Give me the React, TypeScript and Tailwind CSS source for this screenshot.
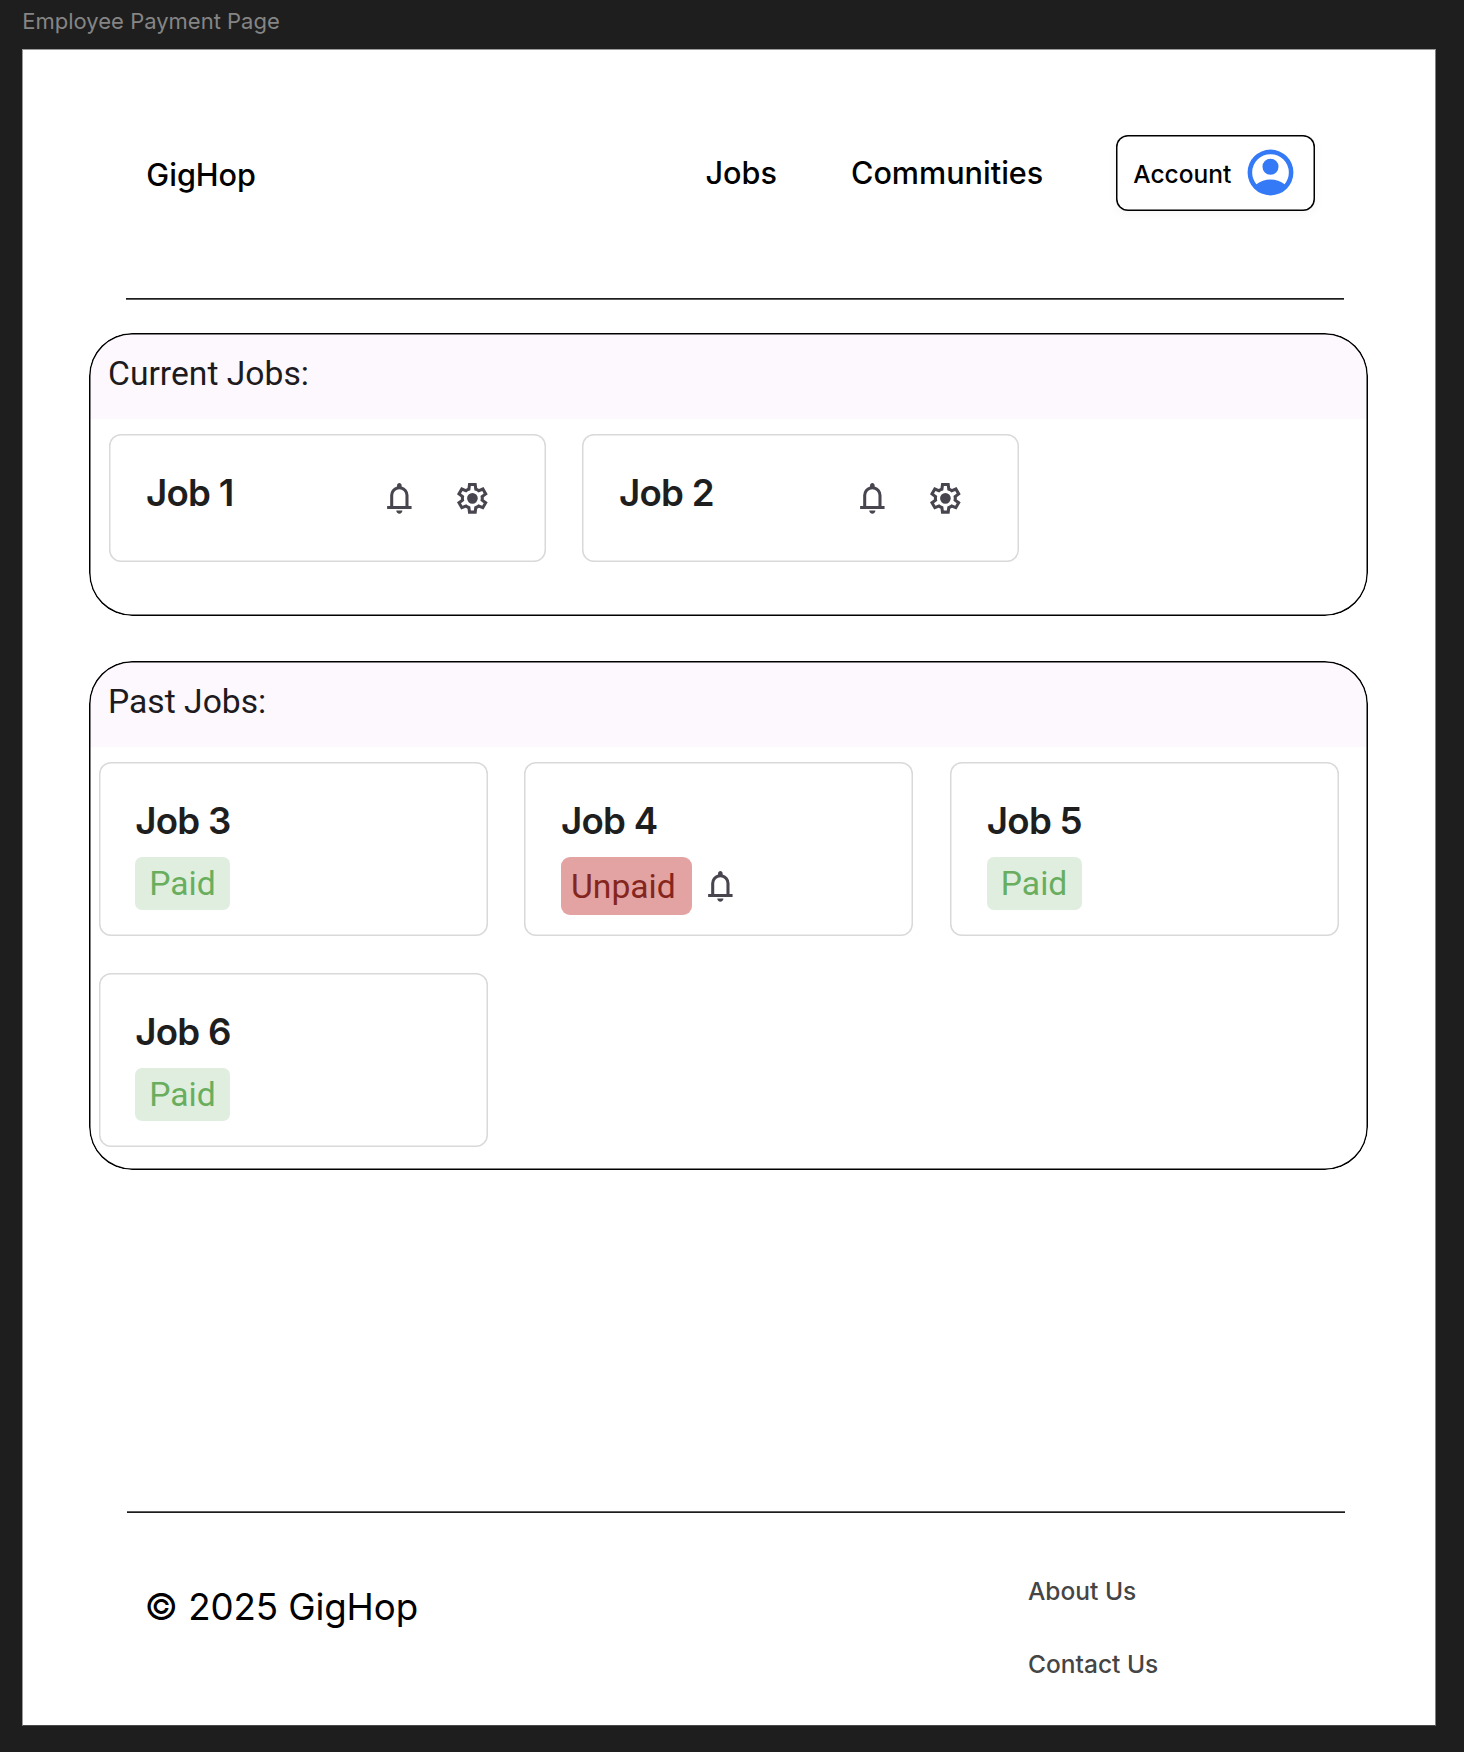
import React from "react";

function BellIcon({ className = "" }: { className?: string }) {
  return (
    <svg viewBox="0 0 24 24" fill="#49454f" className={`size-[36.7px] shrink-0 ${className}`}>
      <path d="M4 19v-2h2v-7q0-2.075 1.25-3.687T10.5 4.2v-.7q0-.625.438-1.062T12 2t1.063.438T13.5 3.5v.7q2 .5 3.25 2.113T18 10v7h2v2zm8 3q-.825 0-1.412-.587T10 20h4q0 .825-.587 1.413T12 22m-4-5h8v-7q0-1.65-1.175-2.825T12 6T9.175 7.175T8 10z" />
    </svg>
  );
}

function GearIcon({ className = "" }: { className?: string }) {
  return (
    <svg viewBox="0 0 24 24" fill="#49454f" className={`size-[36.7px] shrink-0 ${className}`}>
      <path d="m9.25 22l-.4-3.2q-.325-.125-.612-.3t-.563-.375L4.7 19.375l-2.75-4.75l2.575-1.95Q4.5 12.5 4.5 12.337v-.675q0-.162.025-.337L1.95 9.375l2.75-4.75l2.975 1.25q.275-.2.575-.375t.6-.3l.4-3.2h5.5l.4 3.2q.325.125.613.3t.562.375l2.975-1.25l2.75 4.75l-2.575 1.95q.025.175.025.338v.674q0 .163-.05.338l2.575 1.95l-2.75 4.75l-2.95-1.25q-.275.2-.575.375t-.6.3l-.4 3.2zm1.75-2h1.975l.35-2.65q.775-.2 1.438-.587t1.212-.938l2.475 1.025l.975-1.7l-2.15-1.625q.125-.35.175-.737T17.5 12t-.05-.787t-.175-.738l2.15-1.625l-.975-1.7l-2.475 1.05q-.55-.575-1.212-.962t-1.438-.588L13 4h-1.975l-.35 2.65q-.775.2-1.437.588t-1.213.937L5.55 7.15l-.975 1.7l2.15 1.6q-.125.375-.175.75t-.05.8q0 .4.05.775t.175.75l-2.15 1.625l.975 1.7l2.475-1.05q.55.575 1.213.963t1.437.587zm1.05-4.5q1.45 0 2.475-1.025T15.55 12t-1.025-2.475T12.05 8.5q-1.475 0-2.487 1.025T8.55 12t1.013 2.475T12.05 15.5" />
    </svg>
  );
}

function AccountIcon({ className = "" }: { className?: string }) {
  return (
    <svg viewBox="0 0 24 24" fill="#347af6" className={`size-[55px] shrink-0 ${className}`}>
      <path d="M5.85 17.1q1.275-.975 2.85-1.537T12 15t3.3.563t2.85 1.537q.875-1.025 1.363-2.325T20 12q0-3.325-2.337-5.663T12 4T6.337 6.338T4 12q0 1.475.488 2.775T5.85 17.1M12 13q-1.475 0-2.488-1.012T8.5 9.5t1.013-2.488T12 6t2.488 1.013T15.5 9.5t-1.012 2.488T12 13m0 9q-2.075 0-3.9-.788t-3.175-2.137T2.788 15.9T2 12t.788-3.9t2.137-3.175T8.1 2.788T12 2t3.9.788t3.175 2.137T21.213 8.1T22 12t-.788 3.9t-2.137 3.175t-3.175 2.138T12 22" />
    </svg>
  );
}

const cardClass =
  "rounded-[12px] shadow-[inset_0_0_0_1.5px_#d9d9d9] bg-white shrink-0";
const jobTitleClass =
  "text-[36.7px] leading-[44px] font-semibold tracking-[-0.02em] text-[#1e1e1e] whitespace-nowrap";

function CurrentJobCard({ title }: { title: string }) {
  return (
    <div className={`${cardClass} flex h-[128px] w-[436.5px] items-start pl-[36.6px]`}>
      <h3 className={`${jobTitleClass} mt-[37px] w-[235px]`}>{title}</h3>
      <BellIcon className="mt-[45.5px]" />
      <GearIcon className="mt-[45.5px] ml-[36.7px]" />
    </div>
  );
}

function PastJobCard({ title, paid }: { title: string; paid: boolean }) {
  return (
    <div className={`${cardClass} h-[174px] w-[389px] pt-[37px] pl-[36.5px]`}>
      <h3 className={jobTitleClass}>{title}</h3>
      {paid ? (
        <div className="mt-[14px] h-[53px] w-[95px] rounded-[7px] bg-[#e0eee0] pl-[14px] font-[Roboto] text-[33.66px] leading-[53px] text-[#69ae5e]">
          Paid
        </div>
      ) : (
        <div className="mt-[13.5px] flex">
          <div className="h-[58px] w-[131.5px] rounded-[9px] bg-[#e3a3a3] pl-[10px] font-[Roboto] text-[33.66px] leading-[59px] text-[#85261e]">
            Unpaid
          </div>
          <BellIcon className="mt-[11px] ml-[9.3px]" />
        </div>
      )}
    </div>
  );
}

function PanelTitle({ children }: { children: React.ReactNode }) {
  return (
    <h2 className="h-[86px] bg-[#fdf8fe] pt-[20px] pl-[19px] font-[Roboto] text-[33.66px] leading-[42px] text-[#1d1b20]">
      {children}
    </h2>
  );
}

const panelClass =
  "relative ml-[66px] w-[1279px] overflow-hidden rounded-[43px] after:pointer-events-none after:absolute after:inset-0 after:rounded-[43px] after:shadow-[inset_0_0_0_1.5px_#000]";

export default function App() {
  return (
    <div className="h-[1752px] w-[1464px] overflow-hidden bg-[#1e1e1e] font-[Inter]">
      <div className="h-[49px] pt-[8px] pl-[22.3px] text-[22px] leading-[26px] text-[#858585]">
        Employee Payment Page
      </div>
      <div className="ml-[22px] h-[1677px] w-[1414px] border border-t-[#9a9a9a] border-r-[#808080] border-b-[#484848] border-l-[#9a9a9a] bg-white">
        <header className="flex h-[248px] items-start pl-[123.3px] font-medium text-black">
          <div className="mt-[107px] w-[559.2px] text-[30.6px] leading-[36px]">GigHop</div>
          <nav className="mt-[105px] flex w-[410.8px] gap-[74px] text-[30.6px] leading-[36px]">
            <a>Jobs</a>
            <a>Communities</a>
          </nav>
          <button className="mt-[85px] flex h-[76px] w-[199px] items-start rounded-[12px] bg-white pl-[17px] shadow-[inset_0_0_0_1.5px_#000,0_3px_12px_rgba(0,0,0,0.04)]">
            <span className="mt-[23.5px] w-[110px] text-left text-[24.5px] leading-[30px]">Account</span>
            <AccountIcon className="mt-[10.3px]" />
          </button>
        </header>
        <div className="ml-[103px] h-[2px] w-[1218px] border-t border-b border-t-[#1c1c1c] border-b-[#5c5c5c]" />

        <section className={`${panelClass} mt-[33px] h-[283px]`}>
          <PanelTitle>Current Jobs:</PanelTitle>
          <div className="flex gap-[36.5px] pt-[15px] pl-[20.3px]">
            <CurrentJobCard title="Job 1" />
            <CurrentJobCard title="Job 2" />
          </div>
        </section>

        <section className={`${panelClass} mt-[45px] h-[509px]`}>
          <PanelTitle>Past Jobs:</PanelTitle>
          <div className="flex flex-wrap gap-x-[36.8px] gap-y-[36.6px] pt-[15px] pl-[9.7px]">
            <PastJobCard title="Job 3" paid />
            <PastJobCard title="Job 4" paid={false} />
            <PastJobCard title="Job 5" paid />
            <PastJobCard title="Job 6" paid />
          </div>
        </section>

        <div className="mt-[341px] ml-[104.4px] h-[2px] w-[1218px] border-t border-b border-t-[#5c5c5c] border-b-[#1c1c1c]" />
        <footer className="flex items-start pl-[121.5px]">
          <div className="mt-[72px] w-[883.5px] text-[36.7px] leading-[44px] tracking-[-0.1px] text-black">© 2025 GigHop</div>
          <div className="mt-[63px] flex flex-col gap-[43px] text-[24.5px] leading-[30px] font-medium text-[#454545]">
            <a>About Us</a>
            <a>Contact Us</a>
          </div>
        </footer>
      </div>
    </div>
  );
}
